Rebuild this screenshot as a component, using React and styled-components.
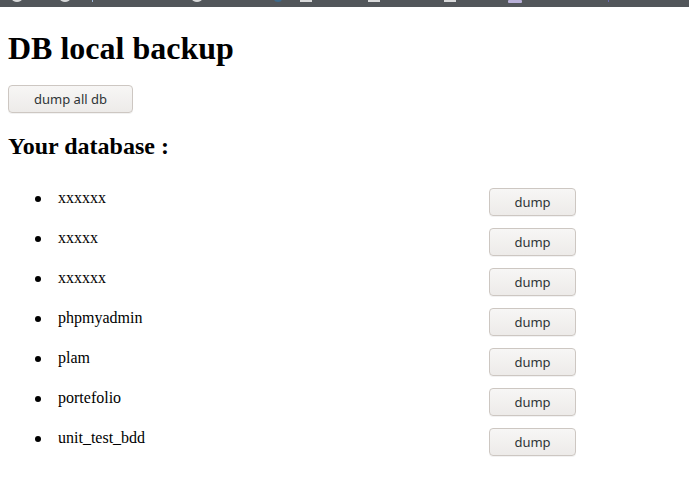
import React from "react";
import styled, { createGlobalStyle } from "styled-components";

const Global = createGlobalStyle`
  html, body { margin: 0; padding: 0; background: #fff; }
  body { font-family: "Liberation Serif", serif; color: #000; }
`;

const Chrome = styled.svg`
  display: block;
  width: 100%;
  height: 7px;
  background: #52565a;
`;

const Page = styled.main`
  padding: 0 8px 8px;
`;

const Title = styled.h1`
  font-family: "Liberation Serif", serif;
  font-weight: bold;
  font-size: 32px;
  margin: 24px 0 20px;
  line-height: 34px;
`;

const Button = styled.button`
  font-family: "Noto Sans", "Open Sans", sans-serif;
  font-size: 13px;
  color: #2e3436;
  background: linear-gradient(#f7f6f5, #edebe9);
  border: 1px solid #cdc7c2;
  border-radius: 4px;
  height: 28px;
  width: ${(p) => p.w}px;
  padding: 0;
  display: flex;
  align-items: center;
  justify-content: center;
  box-shadow: 0 1px rgba(0, 0, 0, 0.05);
`;

const Sub = styled.h2`
  font-family: "Liberation Serif", serif;
  font-weight: bold;
  font-size: 24px;
  margin: 19px 0 28px;
  line-height: 28px;
`;

const List = styled.ul`
  list-style: none;
  margin: 0;
  padding: 0 0 0 27px;
  display: grid;
  gap: 12px;
`;

const Item = styled.li`
  display: grid;
  grid-template-columns: 23px 431px 87px;
  align-items: start;
  height: 28px;
`;

const Bullet = styled.span`
  width: 6px;
  height: 6px;
  border-radius: 50%;
  background: #000;
  margin-top: 8px;
`;

const Name = styled.span`
  font-size: 16px;
  line-height: 20px;
`;

const dbs = ["xxxxxx", "xxxxx", "xxxxxx", "phpmyadmin", "plam", "portefolio", "unit_test_bdd"];

function ChromeStrip() {
  return (
    <Chrome viewBox="0 0 689 7" preserveAspectRatio="none">
      <ellipse cx="17" cy="-1" rx="5" ry="3" fill="#d8d9da" />
      <ellipse cx="65" cy="-1" rx="5" ry="3" fill="#d8d9da" />
      <rect x="92" y="0" width="1" height="2" fill="#9fb8d8" />
      <ellipse cx="197" cy="-1" rx="5" ry="3" fill="#d8d9da" />
      <ellipse cx="278" cy="-1" rx="4" ry="3" fill="#3d6a8c" />
      <rect x="300" y="0" width="12" height="2" fill="#d8d9da" />
      <rect x="368" y="0" width="12" height="2" fill="#d8d9da" />
      <rect x="444" y="0" width="12" height="2" fill="#d8d9da" />
      <rect x="508" y="0" width="14" height="3" rx="1" fill="#b8b0d8" />
      <rect x="608" y="0" width="1" height="2" fill="#6a6ab0" />
    </Chrome>
  );
}

export default function App() {
  return (
    <>
      <Global />
      <ChromeStrip />
      <Page>
        <Title>DB local backup</Title>
        <Button w={125}>dump all db</Button>
        <Sub>Your database :</Sub>
        <List>
          {dbs.map((d, i) => (
            <Item key={i}>
              <Bullet />
              <Name>{d}</Name>
              <Button w={87}>dump</Button>
            </Item>
          ))}
        </List>
      </Page>
    </>
  );
}
